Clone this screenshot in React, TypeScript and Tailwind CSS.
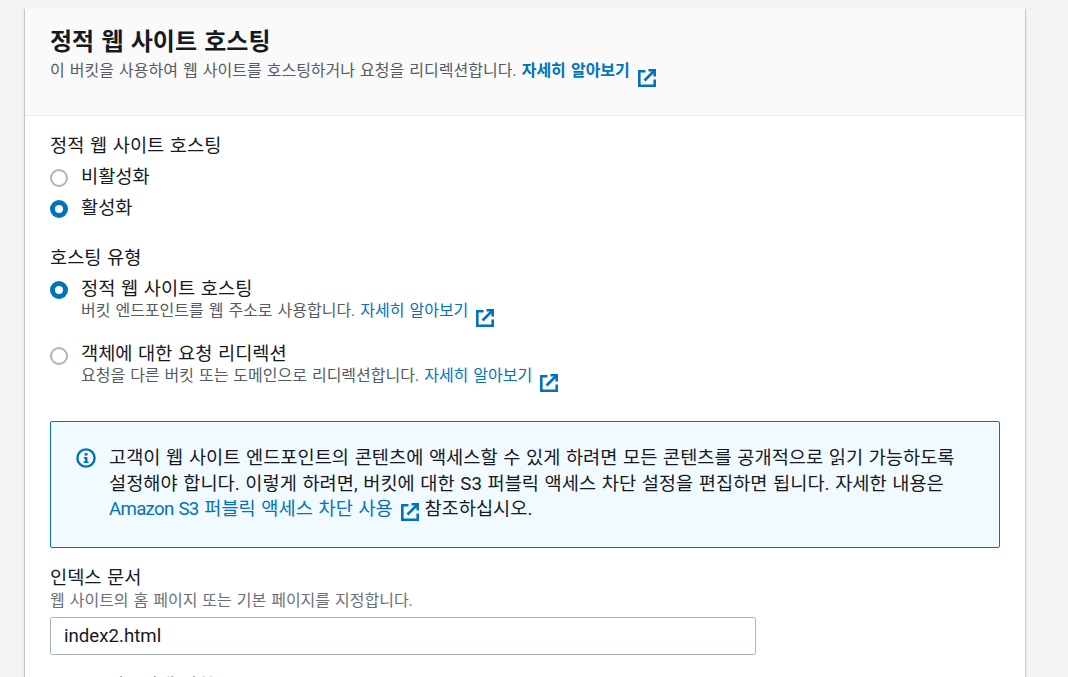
const font = { fontFamily: 'Roboto, "Noto Sans CJK KR", sans-serif' };

function ExternalIcon({ className = "ml-2 align-[-11px]" }: { className?: string }) {
  return (
    <svg viewBox="0 0 18 18" className={"inline-block h-[18px] w-[18px] " + className} fill="none" stroke="#0073bb" strokeWidth="2.6">
      <path d="M7.5 2.3H1.3v14.4h15.4v-6.2" />
      <path d="M6.5 11.5 16 2" />
      <path d="M10.5 1.3h6.2v6.2" />
    </svg>
  );
}

function InfoIcon() {
  return (
    <svg viewBox="0 0 20 20" className="h-5 w-5 shrink-0">
      <circle cx="10" cy="10" r="8.6" fill="none" stroke="#0073bb" strokeWidth="2.4" />
      <rect x="8.7" y="5" width="2.8" height="2.6" fill="#0073bb" />
      <path d="M7.8 9h3.6v4.4h1.2v1.6H7.6v-1.6h1.3v-2.8H7.8z" fill="#0073bb" />
    </svg>
  );
}

function Radio({ checked }: { checked?: boolean }) {
  return checked ? (
    <span className="flex h-[18px] w-[18px] shrink-0 items-center justify-center rounded-full bg-[#0073bb]">
      <span className="h-2 w-2 rounded-full bg-white" />
    </span>
  ) : (
    <span className="block h-[18px] w-[18px] shrink-0 rounded-full border-2 border-[#aab7b8] bg-white" />
  );
}

export default function App() {
  return (
    <div style={font} className="h-[677px] overflow-hidden bg-[#f2f3f3] pt-2 pl-[25px] pr-[43px] text-[#16191f] [word-spacing:1px]">
      <div className="h-[700px] bg-white shadow-[0_1px_1px_0_rgba(0,28,36,0.3),1px_1px_1px_0_rgba(0,28,36,0.15),-1px_1px_1px_0_rgba(0,28,36,0.15)]">
        {/* Header */}
        <div className="h-[108px] border-b border-[#eaeded] bg-[#fafafa] px-[25px] pt-[19px]">
          <h2 className="text-[24px] leading-[30px] font-bold [word-spacing:1.3px]">정적 웹 사이트 호스팅</h2>
          <p className="mt-[4px] h-[20px] text-[16px] leading-[20px] text-[#545b64] [word-spacing:1.1px]">
            이 버킷을 사용하여 웹 사이트를 호스팅하거나 요청을 리디렉션합니다.{" "}
            <a className="font-bold text-[#0073bb]">자세히 알아보기</a>
            <ExternalIcon />
          </p>
        </div>

        {/* Body */}
        <div className="px-[25px] pt-[18px]">
          <div className="text-[18.67px] leading-[24px]">정적 웹 사이트 호스팅</div>
          <div className="mt-[7px] flex items-center gap-[13px] text-[18.67px] leading-[24px]">
            <div className="mt-[2px]"><Radio /></div>
            <span>비활성화</span>
          </div>
          <div className="mt-[7px] flex items-center gap-[13px] text-[18.67px] leading-[24px]">
            <div className="mt-[2px]"><Radio checked /></div>
            <span>활성화</span>
          </div>

          <div className="mt-[26px] text-[18.67px] leading-[24px]">호스팅 유형</div>
          <div className="mt-[7px] flex gap-[13px]">
            <div className="mt-[4px]"><Radio checked /></div>
            <div>
              <div className="text-[18.67px] leading-[24px]">정적 웹 사이트 호스팅</div>
              <div className="h-[20px] text-[16px] leading-[20px] text-[#545b64]">
                버킷 엔드포인트를 웹 주소로 사용합니다. <a className="text-[#0073bb]">자세히 알아보기</a>
                <ExternalIcon />
              </div>
            </div>
          </div>
          <div className="mt-[21px] flex gap-[13px]">
            <div className="mt-[5px]"><Radio /></div>
            <div>
              <div className="text-[18.67px] leading-[24px]">객체에 대한 요청 리디렉션</div>
              <div className="h-[20px] text-[16px] leading-[20px] text-[#545b64]">
                요청을 다른 버킷 또는 도메인으로 리디렉션합니다. <a className="text-[#0073bb]">자세히 알아보기</a>
                <ExternalIcon />
              </div>
            </div>
          </div>

          {/* Info alert */}
          <div className="mt-[35px] flex h-[127px] gap-[13px] rounded-[2px] border border-[#0073bb] bg-[#f1faff] pt-[24px] pr-[36px] pl-[25px]">
            <div className="pt-[2px]"><InfoIcon /></div>
            <p className="text-[18.67px] leading-[25.5px] [word-spacing:1px]">
              고객이 웹 사이트 엔드포인트의 콘텐츠에 액세스할 수 있게 하려면 모든 콘텐츠를 공개적으로 읽기 가능하도록 설정해야 합니다. 이렇게 하려면, 버킷에 대한 S3 퍼블릭 액세스 차단 설정을 편집하면 됩니다. 자세한 내용은{" "}
              <a className="whitespace-nowrap text-[#0073bb]"><span className="tracking-[-0.7px]">Amazon S3</span> 퍼블릭 액세스 차단 사용</a>
              <ExternalIcon className="ml-2 align-[-6px]" /> 참조하십시오.
            </p>
          </div>

          <div className="mt-[18px] text-[18.67px] leading-[24px]">인덱스 문서</div>
          <div className="mt-[1px] text-[16px] leading-[20px] text-[#687078]">웹 사이트의 홈 페이지 또는 기본 페이지를 지정합니다.</div>
          <input
            readOnly
            value="index2.html"
            style={font}
            className="mt-[6px] block h-[38px] w-[706px] rounded-[2px] border border-[#aab7b8] bg-white px-[13px] text-[18.67px] text-[#16191f] outline-none"
          />
          <div className="mt-[19px] text-[18.67px] leading-[24px]">오류 문서 - 선택 사항</div>
        </div>
      </div>
    </div>
  );
}
